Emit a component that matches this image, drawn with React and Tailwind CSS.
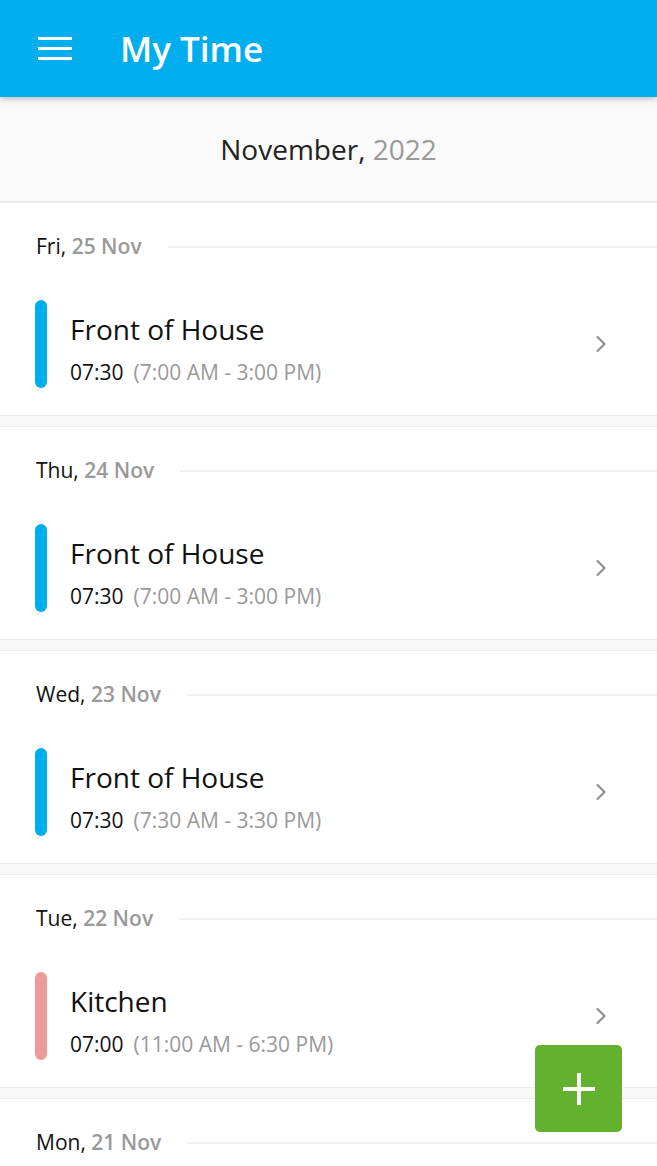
import { useState } from 'react';

const shifts = [
  { day: 'Fri,', date: '25 Nov', title: 'Front of House', hours: '07:30', range: '(7:00 AM - 3:00 PM)', color: 'bg-[#00aeef]' },
  { day: 'Thu,', date: '24 Nov', title: 'Front of House', hours: '07:30', range: '(7:00 AM - 3:00 PM)', color: 'bg-[#00aeef]' },
  { day: 'Wed,', date: '23 Nov', title: 'Front of House', hours: '07:30', range: '(7:30 AM - 3:30 PM)', color: 'bg-[#00aeef]' },
  { day: 'Tue,', date: '22 Nov', title: 'Kitchen', hours: '07:00', range: '(11:00 AM - 6:30 PM)', color: 'bg-[#ef9a9a]' },
  { day: 'Mon,', date: '21 Nov', title: 'Front of House', hours: '07:30', range: '(7:00 AM - 3:00 PM)', color: 'bg-[#00aeef]' },
];

const Chevron = () => (
  <svg width="12" height="18" viewBox="0 0 12 18" fill="none">
    <path d="M2.5 2 L9.5 9 L2.5 16" stroke="#8a8a8a" strokeWidth="2" strokeLinecap="round" strokeLinejoin="round" />
  </svg>
);

const ShiftCard = ({ shift }) => (
  <div className="bg-white border-y border-[#ececec] h-[214px] mb-[10px]">
    <div className="flex items-center pl-[36px] pt-[31px] h-[57px]">
      <span className="text-[21px] text-[#111] whitespace-nowrap">
        {shift.day} <span className="font-semibold text-[#999]">{shift.date}</span>
      </span>
      <div className="flex-1 h-[2px] bg-[#f0f0f0] ml-[26px]" />
    </div>
    <div className="flex items-start mt-[40px] pl-[35px] pr-[50px]">
      <div className={`w-[12px] h-[88px] rounded-full ${shift.color}`} />
      <div className="flex-1 pl-[23px] pt-[11px]">
        <div className="text-[28px] leading-[36px] text-[#111]">{shift.title}</div>
        <div className="text-[21px] leading-[26px] mt-[12px] whitespace-nowrap">
          <span className="text-[#111]">{shift.hours}</span>
          <span className="text-[#999] ml-[10px]">{shift.range}</span>
        </div>
      </div>
      <div className="pt-[35px]">
        <Chevron />
      </div>
    </div>
  </div>
);

export default function App() {
  const [items] = useState(shifts);

  return (
    <div className="relative w-[657px] h-[1166px] overflow-hidden bg-[#f8f8f8]" style={{ fontFamily: '"Open Sans", "Noto Sans", sans-serif' }}>
      <header className="relative z-10 h-[97px] bg-[#00aeef] flex items-center shadow-[0_2px_6px_rgba(0,0,0,0.25)]">
        <div className="ml-[38px] w-[34px] flex flex-col gap-[7px]">
          <span className="block h-[3px] bg-white" />
          <span className="block h-[3px] bg-white" />
          <span className="block h-[3px] bg-white" />
        </div>
        <h1 className="ml-[48px] text-white text-[35px] font-semibold leading-none">My Time</h1>
      </header>

      <div className="h-[105px] bg-[#fafafa] flex items-center justify-center border-b border-[#ececec]">
        <span className="text-[28px] text-[#222]">
          November, <span className="text-[#999]">2022</span>
        </span>
      </div>

      <div>
        {items.map((s, i) => (
          <ShiftCard key={i} shift={s} />
        ))}
      </div>

      <button className="absolute left-[535px] top-[1045px] w-[87px] h-[87px] rounded-[5px] bg-[#62b22f] flex items-center justify-center">
        <svg width="36" height="36" viewBox="0 0 36 36">
          <path d="M18 2 V34 M2 18 H34" stroke="white" strokeWidth="4" />
        </svg>
      </button>
    </div>
  );
}
